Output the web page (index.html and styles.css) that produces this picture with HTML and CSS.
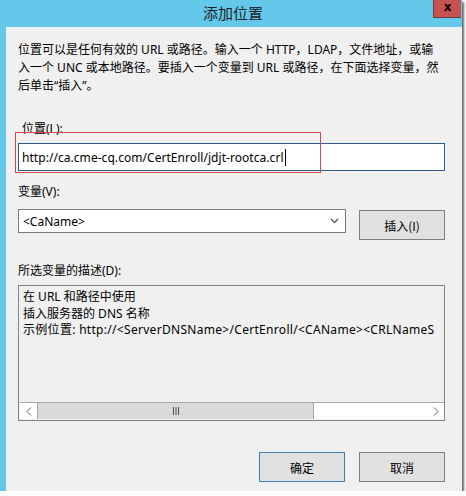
FILE: index.html
```html
<!DOCTYPE html>
<html lang="zh-CN">
<head>
<meta charset="utf-8">
<title>添加位置</title>
<link rel="stylesheet" href="styles.css">
</head>
<body>
<div class="window">
  <div class="titlebar">
    <span class="title">添加位置</span>
    <div class="close">x</div>
  </div>
  <div class="client">
    <p class="intro">位置可以是任何有效的 URL 或路径。输入一个 HTTP，LDAP，文件地址，或输<br>入一个 UNC 或本地路径。要插入一个变量到 URL 或路径，在下面选择变量，然<br>后单击“插入”。</p>
    <div class="label indent">位置(L):</div>
    <div class="field-wrap">
      <div class="input"><span>http://ca.cme-cq.com/CertEnroll/jdjt-rootca.crl</span><span class="caret"></span></div>
      <div class="highlight"></div>
    </div>
    <div class="label gap-var">变量(V):</div>
    <div class="var-row">
      <div class="select">
        <span>&lt;CaName&gt;</span>
        <svg class="chev" width="9" height="6" viewBox="0 0 9 6"><polyline points="1,1 4.5,4.5 8,1" fill="none" stroke="#555" stroke-width="1.3"/></svg>
      </div>
      <div class="btn insert">插入(I)</div>
    </div>
    <div class="label gap-desc">所选变量的描述(D):</div>
    <div class="desc">
      <div class="desc-text">在 URL 和路径中使用<br>插入服务器的 DNS 名称<br><span class="example">示例位置: http://&lt;ServerDNSName&gt;/CertEnroll/&lt;CAName&gt;&lt;CRLNameS</span></div>
      <div class="hscroll">
        <div class="arrow"><svg width="6" height="9" viewBox="0 0 6 9"><polyline points="5,0.5 1,4.5 5,8.5" fill="none" stroke="#606060" stroke-width="1"/></svg></div>
        <div class="thumb"><svg width="8" height="8" viewBox="0 0 8 8"><path d="M1.5 0V8M4 0V8M6.5 0V8" stroke="#505050" stroke-width="1"/></svg></div>
        <div class="track"></div>
        <div class="arrow"><svg width="6" height="9" viewBox="0 0 6 9"><polyline points="1,0.5 5,4.5 1,8.5" fill="none" stroke="#606060" stroke-width="1"/></svg></div>
      </div>
    </div>
    <div class="actions">
      <div class="btn default">确定</div>
      <div class="btn">取消</div>
    </div>
  </div>
</div>
</body>
</html>
```
FILE: styles.css
```css
html, body {
  margin: 0;
  padding: 0;
  background: #ffffff;
}
body {
  font-family: "Noto Sans", "Noto Sans CJK SC", sans-serif;
  font-size: 12px;
  color: #000;
}
.window {
  width: 462px;
  height: 491px;
  background: #64c8ea;
  display: flex;
  flex-direction: column;
  box-shadow: 2px 2px 2px rgba(0, 0, 0, 0.6);
}
.titlebar {
  height: 27px;
  position: relative;
  display: flex;
  align-items: center;
  justify-content: center;
  padding-left: 4px;
}
.title {
  font-family: "Noto Sans CJK SC", sans-serif;
  font-size: 15px;
  color: #1e1e1e;
  line-height: 18px;
  margin-top: -1px;
}
.close {
  position: absolute;
  right: 1px;
  top: 0;
  width: 27px;
  height: 17px;
  background: #c75050;
  border-left: 1px solid #6b3a3a;
  border-bottom: 1px solid #6b3a3a;
  color: #000;
  font-family: "DejaVu Sans", sans-serif;
  font-weight: bold;
  font-size: 12px;
  line-height: 15px;
  text-align: center;
}
.client {
  margin-left: 6px;
  flex: 1;
  background: #f0f0f0;
  padding: 14px 17px 0 12px;
  display: flex;
  flex-direction: column;
}
.intro {
  margin: 0;
  line-height: 18px;
  white-space: nowrap;
}
.label {
  line-height: 18px;
  white-space: nowrap;
}
.indent {
  margin-top: 25px;
  padding-left: 4px;
}
.field-wrap {
  position: relative;
  margin-top: 5px;
}
.input {
  height: 26px;
  border: 1px solid #2f5b85;
  background: #ffffff;
  display: flex;
  align-items: center;
  padding-left: 3px;
  white-space: nowrap;
  font-size: 12px;
  letter-spacing: 0.05px;
}
.caret {
  display: inline-block;
  width: 1px;
  height: 17px;
  background: #000;
  margin-left: 1px;
}
.highlight {
  position: absolute;
  left: -3px;
  top: -11px;
  width: 304px;
  height: 39px;
  border: 1px solid #d24a4a;
}
.gap-var {
  margin-top: 12px;
}
.var-row {
  margin-top: 8px;
  display: flex;
  justify-content: space-between;
  align-items: flex-start;
}
.select {
  width: 316px;
  height: 22px;
  border: 1px solid #7a7a7a;
  background: #fff;
  display: flex;
  align-items: center;
  justify-content: space-between;
  padding: 0 6px 0 4px;
}
.btn {
  width: 84px;
  height: 28px;
  background: #e1e1e1;
  border: 1px solid #7f7f7f;
  display: flex;
  align-items: center;
  justify-content: center;
  font-family: "Noto Sans CJK SC", sans-serif;
  font-size: 12px;
}
.insert {
  margin-top: 1px;
}
.gap-desc {
  margin-top: 22px;
}
.desc {
  margin-top: 5px;
  height: 134px;
  border: 1px solid #828282;
  display: flex;
  flex-direction: column;
  overflow: hidden;
}
.desc-text {
  flex: 1;
  padding: 3px 4px;
  line-height: 16.5px;
  white-space: nowrap;
  overflow: hidden;
}
.example {
  letter-spacing: 0.3px;
}
.hscroll {
  height: 16px;
  margin: 0 0 1px 1px;
  border-top: 1px solid #a8a8a8;
  display: flex;
  background: #fff;
}
.arrow {
  width: 17px;
  display: flex;
  align-items: center;
  justify-content: center;
  background: #fff;
}
.thumb {
  width: 275px;
  background: #dadada;
  border-left: 1px solid #a8a8a8;
  border-right: 1px solid #a8a8a8;
  display: flex;
  align-items: center;
  justify-content: center;
}
.track {
  flex: 1;
}
.actions {
  margin-top: 31px;
  display: flex;
  justify-content: flex-end;
  gap: 14px;
}
.default {
  border-color: #3c7fb1;
}
```
